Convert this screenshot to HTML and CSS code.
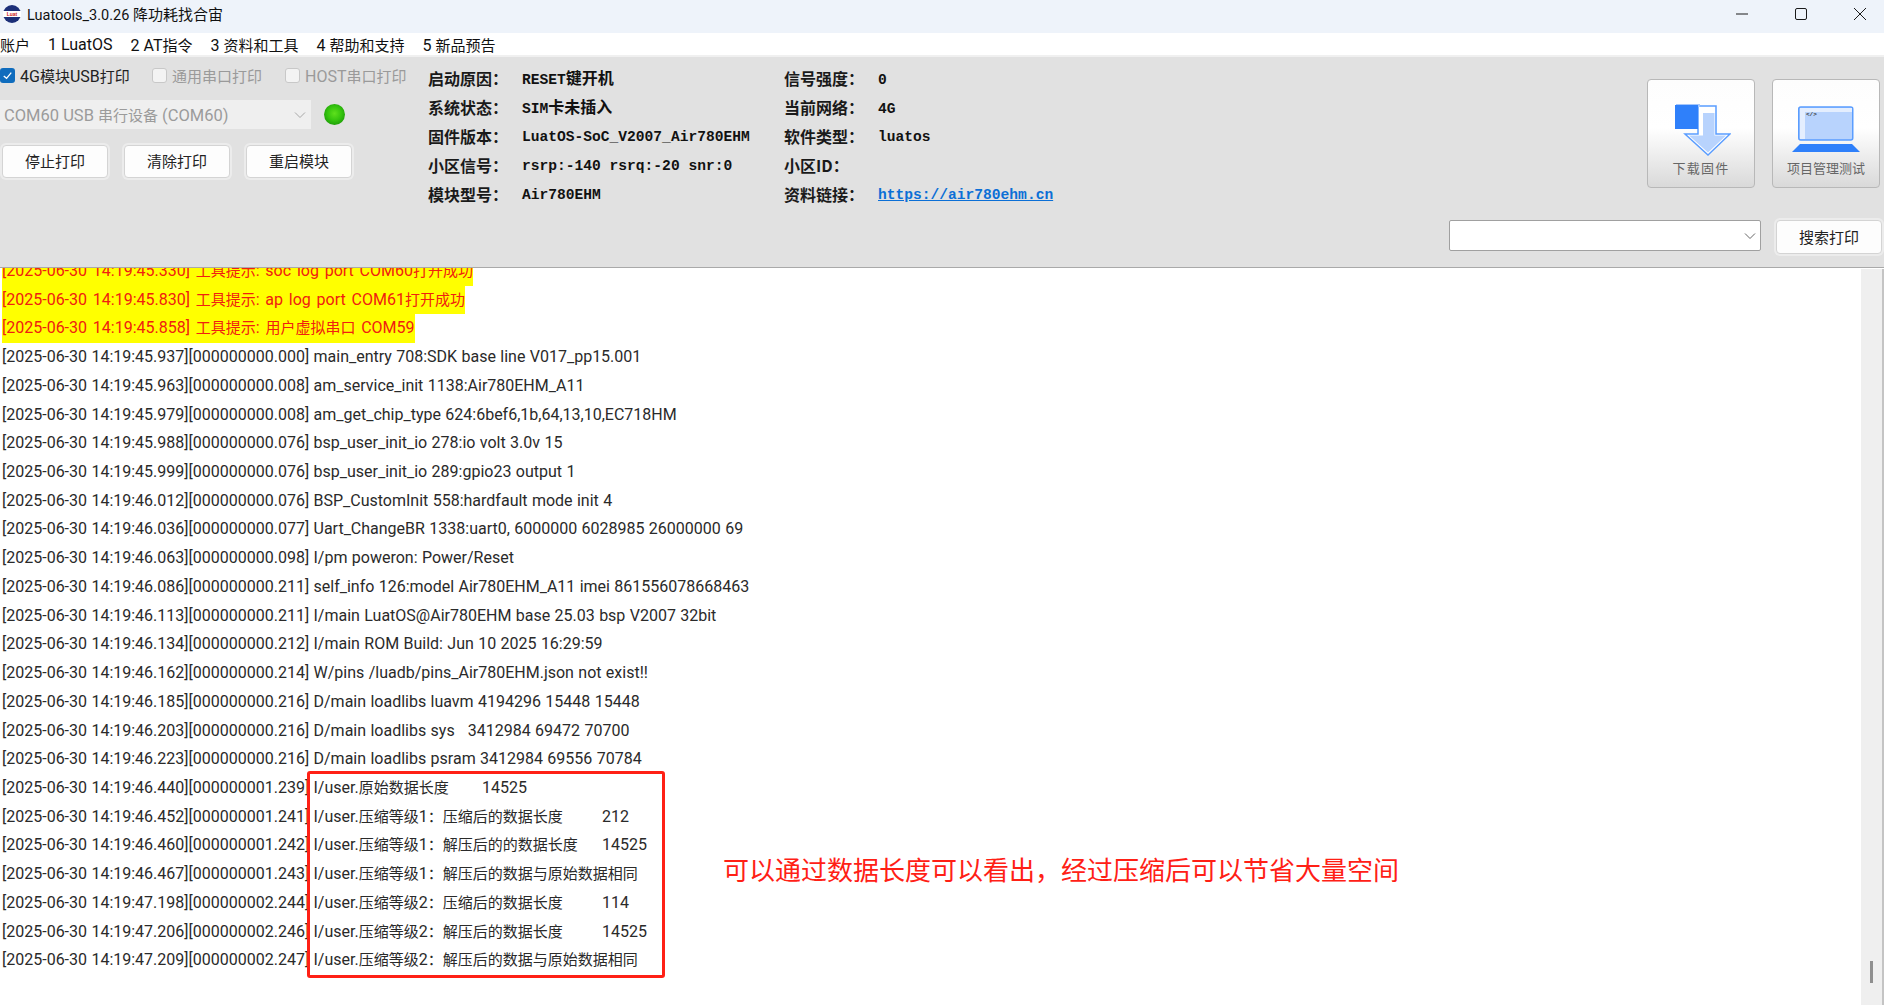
FILE: index.html
```html
<!DOCTYPE html>
<html lang="zh-CN">
<head>
<meta charset="utf-8">
<title>Luatools</title>
<link rel="stylesheet" href="styles.css">
</head>
<body>
<div class="app">
  <header class="titlebar">
    <svg class="logo" viewBox="0 0 18 18" aria-hidden="true">
      <circle cx="9" cy="9" r="9" fill="#1c2f78"/>
      <rect x="0" y="6" width="18" height="6" fill="#fff"/>
      <text x="9" y="11" class="logo-text" text-anchor="middle">Luat</text>
    </svg>
    <span class="title">Luatools_3.0.26 <span class="zh">降功耗找合宙</span></span>
    <div class="winctl">
      <svg class="winicon" viewBox="0 0 12 12"><path d="M0 6H12" stroke="#1a1a1a" fill="none"/></svg>
      <svg class="winicon" viewBox="0 0 12 12"><rect x=".5" y=".5" width="11" height="11" rx="1.5" stroke="#1a1a1a" fill="none"/></svg>
      <svg class="winicon" viewBox="0 0 12 12"><path d="M0 0L12 12M12 0L0 12" stroke="#1a1a1a" fill="none"/></svg>
    </div>
  </header>
  <nav class="menubar">
    <span class="zh">账户</span><span>1 LuatOS</span><span>2 AT<span class="zh">指令</span></span><span>3 <span class="zh">资料和工具</span></span><span>4 <span class="zh">帮助和支持</span></span><span>5 <span class="zh">新品预告</span></span>
  </nav>
  <section class="toolbar">
    <div class="controls">
      <div class="checks">
        <label class="check on"><span class="box"><svg viewBox="0 0 16 16"><path d="M4 8.5L7 11L12 5" stroke="#fff" stroke-width="1.4" fill="none"/></svg></span><span>4G<span class="zh">模块</span>USB<span class="zh">打印</span></span></label>
        <label class="check off"><span class="box"></span><span class="zh">通用串口打印</span></label>
        <label class="check off"><span class="box"></span><span>HOST<span class="zh">串口打印</span></span></label>
      </div>
      <div class="portrow">
        <div class="portselect"><span>COM60 USB <span class="zh">串行设备</span> (COM60)</span>
          <svg class="chev" viewBox="0 0 12 8"><path d="M1 1.5L6 6.5L11 1.5" stroke="#a8a8a8" fill="none"/></svg>
        </div>
        <span class="led"></span>
      </div>
      <div class="btnrow">
        <button class="btn">停止打印</button><button class="btn">清除打印</button><button class="btn">重启模块</button>
      </div>
    </div>
    <div class="info">
      <span class="lbl">启动原因：</span><span class="val">RESET<span class="cjk">键开机</span></span><span class="lbl">信号强度：</span><span class="val">0</span>
      <span class="lbl">系统状态：</span><span class="val">SIM<span class="cjk">卡未插入</span></span><span class="lbl">当前网络：</span><span class="val">4G</span>
      <span class="lbl">固件版本：</span><span class="val">LuatOS-SoC_V2007_Air780EHM</span><span class="lbl">软件类型：</span><span class="val">luatos</span>
      <span class="lbl">小区信号：</span><span class="val">rsrp:-140 rsrq:-20 snr:0</span><span class="lbl">小区ID：</span><span class="val"></span>
      <span class="lbl">模块型号：</span><span class="val">Air780EHM</span><span class="lbl">资料链接：</span><a class="val link" href="#">https://air780ehm.cn</a>
    </div>
    <div class="actions">
      <div class="bigbtns">
        <button class="bigbtn">
          <svg class="bigicon dl" viewBox="0 0 56 58">
            <path d="M23 4H41V32H55L33 53L10 32H23Z" fill="#fff" stroke="#5a9dff" stroke-width="1.5"/>
            <path d="M28 11H39.5V33.5H51L33 50.5L14 33.5H28Z" fill="#b8d3fd"/>
            <rect x="1" y="2" width="24" height="3" fill="#a4c6fb"/>
            <rect x="0" y="3" width="23" height="24" fill="#2f80fa"/>
          </svg>
          <span class="biglabel wide">下载固件</span>
        </button>
        <button class="bigbtn">
          <svg class="bigicon" viewBox="0 0 68 58">
            <rect x="6.75" y="5" width="54" height="33" rx="2" fill="#b8d3fd" stroke="#5a9dff" stroke-width="1.5"/>
            <rect x="8" y="6" width="52" height="4" fill="#e4eefe"/>
            <rect x="8" y="6" width="5" height="31" fill="#e4eefe"/>
            <text x="14" y="14" class="codetext">&lt;/&gt;</text>
            <path d="M8 42H60L68 50H0Z" fill="#2f80fa"/>
          </svg>
          <span class="biglabel">项目管理测试</span>
        </button>
      </div>
      <div class="searchrow">
        <div class="searchbox"><svg class="chev dark" viewBox="0 0 12 8"><path d="M1 1.5L6 6.5L11 1.5" stroke="#666" fill="none"/></svg></div>
        <button class="btn search">搜索打印</button>
      </div>
    </div>
  </section>
  <main class="logpane">
    <div class="log">
<div class="row hl">[2025-06-30 14:19:45.330] <span class="zh">工具提示</span>: soc log port COM60<span class="zh">打开成功</span></div>
<div class="row hl">[2025-06-30 14:19:45.830] <span class="zh">工具提示</span>: ap log port COM61<span class="zh">打开成功</span></div>
<div class="row hl">[2025-06-30 14:19:45.858] <span class="zh">工具提示</span>: <span class="zh">用户虚拟串口</span> COM59</div>
<div class="row">[2025-06-30 14:19:45.937][000000000.000] main_entry 708:SDK base line V017_pp15.001</div>
<div class="row">[2025-06-30 14:19:45.963][000000000.008] am_service_init 1138:Air780EHM_A11</div>
<div class="row">[2025-06-30 14:19:45.979][000000000.008] am_get_chip_type 624:6bef6,1b,64,13,10,EC718HM</div>
<div class="row">[2025-06-30 14:19:45.988][000000000.076] bsp_user_init_io 278:io volt 3.0v 15</div>
<div class="row">[2025-06-30 14:19:45.999][000000000.076] bsp_user_init_io 289:gpio23 output 1</div>
<div class="row">[2025-06-30 14:19:46.012][000000000.076] BSP_CustomInit 558:hardfault mode init 4</div>
<div class="row">[2025-06-30 14:19:46.036][000000000.077] Uart_ChangeBR 1338:uart0, 6000000 6028985 26000000 69</div>
<div class="row">[2025-06-30 14:19:46.063][000000000.098] I/pm poweron: Power/Reset</div>
<div class="row">[2025-06-30 14:19:46.086][000000000.211] self_info 126:model Air780EHM_A11 imei 861556078668463</div>
<div class="row">[2025-06-30 14:19:46.113][000000000.211] I/main LuatOS@Air780EHM base 25.03 bsp V2007 32bit</div>
<div class="row">[2025-06-30 14:19:46.134][000000000.212] I/main ROM Build: Jun 10 2025 16:29:59</div>
<div class="row">[2025-06-30 14:19:46.162][000000000.214] W/pins /luadb/pins_Air780EHM.json not exist!!</div>
<div class="row">[2025-06-30 14:19:46.185][000000000.216] D/main loadlibs luavm 4194296 15448 15448</div>
<div class="row">[2025-06-30 14:19:46.203][000000000.216] D/main loadlibs sys   3412984 69472 70700</div>
<div class="row">[2025-06-30 14:19:46.223][000000000.216] D/main loadlibs psram 3412984 69556 70784</div>
<div class="row">[2025-06-30 14:19:46.440][000000001.239] I/user.<span class="zh">原始数据长度</span>	14525</div>
<div class="row">[2025-06-30 14:19:46.452][000000001.241] I/user.<span class="zh">压缩等级</span>1<span class="zh">：压缩后的数据长度</span>	212</div>
<div class="row">[2025-06-30 14:19:46.460][000000001.242] I/user.<span class="zh">压缩等级</span>1<span class="zh">：解压后的的数据长度</span>	14525</div>
<div class="row">[2025-06-30 14:19:46.467][000000001.243] I/user.<span class="zh">压缩等级</span>1<span class="zh">：解压后的数据与原始数据相同</span></div>
<div class="row">[2025-06-30 14:19:47.198][000000002.244] I/user.<span class="zh">压缩等级</span>2<span class="zh">：压缩后的数据长度</span>	114</div>
<div class="row">[2025-06-30 14:19:47.206][000000002.246] I/user.<span class="zh">压缩等级</span>2<span class="zh">：解压后的数据长度</span>	14525</div>
<div class="row">[2025-06-30 14:19:47.209][000000002.247] I/user.<span class="zh">压缩等级</span>2<span class="zh">：解压后的数据与原始数据相同</span></div>
    </div>
    <div class="scrollbar"><span class="thumb"></span></div>
    <div class="redbox"></div>
    <div class="note">可以通过数据长度可以看出，经过压缩后可以节省大量空间</div>
  </main>
</div>
</body>
</html>
```
FILE: styles.css
```css
* { box-sizing: border-box; }
html, body { margin: 0; height: 100%; overflow: hidden; }
body { font-family: Roboto, "Noto Sans CJK SC", sans-serif; font-size: 16px; color: #222; background: #fff; }
.app { display: flex; flex-direction: column; height: 1005px; }
.zh { font-size: 15px; }

.titlebar { height: 33px; background: #eef3fa; display: flex; align-items: center; padding: 0 18px 6px 3px; flex: none; }
.logo { width: 18px; height: 18px; margin-right: 6px; }
.logo-text { font: bold 5px "Liberation Sans", sans-serif; fill: #c22; }
.title { font-size: 14.5px; color: #111; }
.winctl { margin-left: auto; display: flex; gap: 47px; }
.winicon { width: 12px; height: 12px; display: block; }

.menubar { height: 22px; background: #fff; display: flex; gap: 18px; align-items: center; flex: none; color: #111; }

.toolbar { height: 213px; flex: none; background: #e1e1e1; border-top: 2px solid #f0f0f0; display: flex; position: relative; border-bottom: 1px solid #a9a9a9; }
.controls { width: 428px; flex: none; display: flex; flex-direction: column; }
.checks { display: flex; height: 43px; padding-top: 10px; }
.check { display: flex; align-items: center; height: 16px; }
.check:nth-child(1) { width: 152px; }
.check:nth-child(2) { width: 133px; }
.check.off { color: #9a9a9a; }
.box { width: 15px; height: 15px; border-radius: 3px; margin-right: 5px; display: block; flex: none; }
.on .box { background: #0f6cbd; }
.box svg { display: block; width: 15px; height: 15px; }
.off .box { background: #f3f3f3; border: 1px solid #c8c8c8; }
.portrow { display: flex; align-items: center; height: 29px; }
.portselect { width: 311px; height: 29px; background: #efefef; color: #9b9b9b; font-size: 16.5px; display: flex; align-items: center; justify-content: space-between; padding: 0 5px 0 4px; }
.chev { width: 12px; height: 8px; display: block; }
.led { width: 21px; height: 21px; border-radius: 50%; margin-left: 13px; background: radial-gradient(circle at 50% 45%, #5ee01c 0, #35c40e 45%, #1c9a08 80%, #0f7c06 100%); }
.btnrow { display: flex; gap: 16px; padding: 16px 0 0 2px; }
.btn { width: 106px; height: 33px; padding: 0 0 2px; background: #fdfdfd; border: 1px solid #d4d4d4; border-radius: 4px; box-shadow: 0 0 0 2px #ececec; font: 15px Roboto, "Noto Sans CJK SC", sans-serif; color: #222; }

.info { display: grid; grid-template-columns: 94px 262px 94px auto; grid-auto-rows: 28.8px; align-items: center; padding-top: 7px; align-content: start; height: 160px; }
.lbl { font-family: "Noto Sans CJK SC", sans-serif; font-size: 16px; font-weight: 700; color: #1a1a1a; line-height: 20px; white-space: nowrap; }
.val { font-family: "Liberation Mono", "Noto Sans CJK SC", monospace; font-size: 14.6px; font-weight: 700; color: #111; line-height: 20px; white-space: nowrap; padding-top: 3px; }
.cjk { font-size: 16px; }
.link { color: #0b6fd6; text-decoration: underline; }

.actions { margin-left: auto; width: 437px; display: flex; flex-direction: column; align-items: flex-end; }
.bigbtns { display: flex; gap: 17px; padding: 22px 4px 0 0; }
.bigbtn { width: 108px; height: 109px; padding: 0; border: 1px solid #b8b8b8; border-radius: 4px; background: linear-gradient(#fdfdfd 0, #fff 45%, #d9d9d9 100%); display: flex; flex-direction: column; align-items: center; font-family: "Noto Sans CJK SC", sans-serif; }
.bigicon { width: 68px; height: 58px; margin-top: 22px; display: block; }
.bigicon.dl { width: 56px; margin-left: 4px; }
.biglabel { font-size: 13px; line-height: 16px; color: #666; white-space: nowrap; }
.biglabel.wide { letter-spacing: 1.2px; }
.codetext { font: bold 6px "Liberation Mono", monospace; fill: #333; }
.searchrow { display: flex; gap: 15px; padding: 32px 2px 0 0; align-items: flex-start; }
.searchbox { width: 312px; height: 31px; background: #fff; border: 1px solid #a0a0a0; border-radius: 2px; display: flex; align-items: center; justify-content: flex-end; padding-right: 4px; }
.btn.search { height: 34px; }

.logpane { flex: 1; position: relative; overflow: hidden; }
.log { margin-top: -11px; padding: 0 0 0 2px; color: #2a2a2a; word-spacing: .4px; }
.row { height: 28.72px; line-height: 28.72px; white-space: pre; tab-size: 120px; width: fit-content; }
.row.hl { background: #ffff00; color: #f02010; word-spacing: 1.8px; }
.scrollbar { position: absolute; top: 1px; right: 0; bottom: 0; width: 23px; background: #efefef; border-right: 2px solid #c4c4c4; }
.thumb { position: absolute; left: 9px; bottom: 22px; width: 3px; height: 22px; background: #8f8f8f; }
.redbox { position: absolute; left: 307px; top: 503px; width: 358px; height: 207px; border: 3px solid #ff2015; border-radius: 3px; }
.note { position: absolute; left: 723px; top: 585px; font-size: 26px; line-height: 36px; color: #ff2015; white-space: nowrap; }
```
